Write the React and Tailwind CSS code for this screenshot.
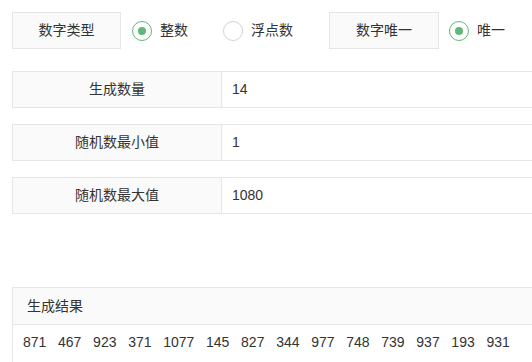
import React, { useState } from 'react';

const FONT = { fontFamily: '"Liberation Sans", "Noto Sans CJK SC", sans-serif' };

const NUMS = [871, 467, 923, 371, 1077, 145, 827, 344, 977, 748, 739, 937, 193, 931];

function Radio({ checked, label, onClick }) {
  return (
    <button onClick={onClick} className="flex items-center gap-[8px] h-[37px]">
      <span
        className={`w-[20px] h-[20px] rounded-full border flex items-center justify-center ${
          checked ? 'border-[#5fb878]' : 'border-[#d2d2d2]'
        }`}
      >
        {checked && <span className="w-[8px] h-[8px] rounded-full bg-[#5fb878]" />}
      </span>
      <span className="text-[14px] text-[#333]">{label}</span>
    </button>
  );
}

function FieldRow({ label, value }) {
  return (
    <div className="flex w-[620px] h-[37px] border border-[#e6e6e6] text-[14px] text-[#333]">
      <div className="w-[209px] shrink-0 bg-[#fafafa] border-r border-[#e6e6e6] flex items-center justify-center">
        {label}
      </div>
      <div className="flex items-center pl-[10px] bg-white">{value}</div>
    </div>
  );
}

export default function App() {
  const [numType, setNumType] = useState('int');
  const [unique, setUnique] = useState(true);

  return (
    <div className="w-full h-[362px] overflow-hidden bg-white" style={FONT}>
      <div className="pl-[12px] pt-[12px]">
        {/* 顶部选项 */}
        <div className="flex items-center">
          <div className="w-[109px] h-[37px] border border-[#e6e6e6] bg-[#fafafa] flex items-center justify-center text-[14px] text-[#333]">
            数字类型
          </div>
          <div className="ml-[11px]">
            <Radio checked={numType === 'int'} label="整数" onClick={() => setNumType('int')} />
          </div>
          <div className="ml-[35px]">
            <Radio checked={numType === 'float'} label="浮点数" onClick={() => setNumType('float')} />
          </div>
          <div className="ml-[36px] w-[110px] h-[37px] border border-[#e6e6e6] bg-[#fafafa] flex items-center justify-center text-[14px] text-[#333]">
            数字唯一
          </div>
          <div className="ml-[10px]">
            <Radio checked={unique} label="唯一" onClick={() => setUnique(!unique)} />
          </div>
        </div>

        {/* 参数 */}
        <div className="mt-[22px] flex flex-col gap-[16px]">
          <FieldRow label="生成数量" value="14" />
          <FieldRow label="随机数最小值" value="1" />
          <FieldRow label="随机数最大值" value="1080" />
        </div>

        {/* 结果 */}
        <div className="mt-[73px] w-[620px] border border-[#e6e6e6] text-[14px] text-[#333]">
          <div className="h-[37px] bg-[#fafafa] border-b border-[#e6e6e6] flex items-center pl-[14px]">
            生成结果
          </div>
          <div className="flex pl-[10px] pt-[7px] pb-[10px]">
            {NUMS.map((n, i) => (
              <span key={i} className="mr-[11.7px]">{n}</span>
            ))}
          </div>
        </div>
      </div>
    </div>
  );
}
